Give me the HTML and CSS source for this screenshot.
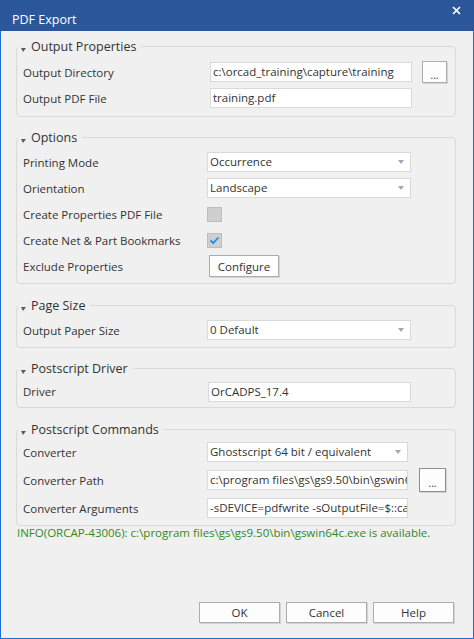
FILE: index.html
```html
<!DOCTYPE html>
<html lang="en">
<head>
<meta charset="utf-8">
<title>PDF Export</title>
<link rel="stylesheet" href="styles.css">
</head>
<body>
<div class="window">
  <div class="titlebar">
    <span class="title">PDF Export</span>
    <span class="close" aria-label="Close">
      <svg width="9" height="9" viewBox="0 0 9 9"><path d="M1 1 L8 8 M8 1 L1 8" stroke="#ffffff" stroke-width="1.7" fill="none"/></svg>
    </span>
  </div>
  <div class="content">
    <fieldset class="group g-output">
      <legend>Output Properties</legend>
      <div class="row"><span class="label">Output Directory</span><div class="ctrl"><div class="text indent">c:\orcad_training\capture\training</div><button class="btn dots dots-a">...</button></div></div>
      <div class="row"><span class="label">Output PDF File</span><div class="ctrl"><div class="text indent">training.pdf</div></div></div>
    </fieldset>

    <fieldset class="group g-options">
      <legend>Options</legend>
      <div class="row"><span class="label">Printing Mode</span><div class="ctrl"><div class="text select">Occurrence</div></div></div>
      <div class="row"><span class="label">Orientation</span><div class="ctrl"><div class="text select">Landscape</div></div></div>
      <div class="row"><span class="label">Create Properties PDF File</span><div class="ctrl"><span class="check"></span></div></div>
      <div class="row"><span class="label">Create Net &amp; Part Bookmarks</span><div class="ctrl"><span class="check checked"><svg width="11" height="9" viewBox="0 0 11 9"><path d="M1.5 4.5 L4.2 7 L9.5 1.5" stroke="#1a8cf0" stroke-width="1.8" fill="none"/></svg></span></div></div>
      <div class="row"><span class="label">Exclude Properties</span><div class="ctrl"><button class="btn configure">Configure</button></div></div>
    </fieldset>

    <fieldset class="group g-page">
      <legend>Page Size</legend>
      <div class="row"><span class="label">Output Paper Size</span><div class="ctrl"><div class="text select">0 Default</div></div></div>
    </fieldset>

    <fieldset class="group g-driver">
      <legend>Postscript Driver</legend>
      <div class="row short"><span class="label">Driver</span><div class="ctrl"><div class="text driver">OrCADPS_17.4</div></div></div>
    </fieldset>

    <fieldset class="group g-commands">
      <legend>Postscript Commands</legend>
      <div class="row tall"><span class="label">Converter</span><div class="ctrl"><div class="text select narrow">Ghostscript 64 bit / equivalent</div></div></div>
      <div class="row tall"><span class="label">Converter Path</span><div class="ctrl"><div class="text narrow">c:\program files\gs\gs9.50\bin\gswin64c.exe</div><button class="btn dots dots-b">...</button></div></div>
      <div class="row tall"><span class="label">Converter Arguments</span><div class="ctrl"><div class="text narrow">-sDEVICE=pdfwrite -sOutputFile=$::capPdfUtil::mPdfFile</div></div></div>
    </fieldset>

    <div class="info">INFO(ORCAP-43006): c:\program files\gs\gs9.50\bin\gswin64c.exe is available.</div>

    <div class="actions">
      <button class="btn action">OK</button>
      <button class="btn action">Cancel</button>
      <button class="btn action">Help</button>
    </div>
  </div>
</div>
</body>
</html>
```
FILE: styles.css
```css
* { box-sizing: border-box; }
html, body { margin: 0; padding: 0; background: #f0f0f0; }
body {
  font-family: "Segoe UI", "Open Sans", "Noto Sans", sans-serif;
  font-size: 11.5px;
  color: #333333;
}
.window {
  width: 474px;
  height: 639px;
  display: flex;
  flex-direction: column;
  border: 1px solid #1f6fd0;
  border-top: none;
  background: #f0f0f0;
}
.titlebar {
  height: 31px;
  flex: none;
  margin: 0 -1px;
  background: #2b579a;
  display: flex;
  align-items: center;
  justify-content: space-between;
  padding: 0 13px 0 12px;
  color: #ffffff;
}
.title { font-size: 12.5px; line-height: 17px; padding-top: 7px; }
.close { display: flex; padding-bottom: 10px; }
.content {
  flex: 1;
  display: flex;
  flex-direction: column;
  padding: 7px 17px 15px 15px;
}
.group {
  margin: 0;
  padding: 3px 0 4px 1px;
  border: 1px solid #d9d9d9;
  border-radius: 4px;
  min-width: 0;
}
.g-output { padding-top: 4px; padding-bottom: 5px; }
.g-options { margin-top: 12px; }
.g-page { margin-top: 13px; }
.g-driver { margin-top: 12px; }
.g-commands { margin-top: 13px; padding-top: 0; padding-bottom: 3px; }
.group legend {
  position: relative;
  padding: 0 5px 0 13px;
  font-size: 12.5px;
  line-height: 17px;
  height: 17px;
  color: #333333;
}
.group legend::before {
  content: "";
  position: absolute;
  left: 3px;
  top: 10px;
  width: 0;
  height: 0;
  border-left: 2px solid transparent;
  border-right: 3px solid transparent;
  border-top: 4px solid #5a5a5a;
}
.row {
  display: flex;
  align-items: center;
  height: 26px;
  padding-left: 5px;
}
.row.short { height: 23px; }
.row.tall { height: 28px; }
.label { width: 184px; flex: none; white-space: nowrap; }
.ctrl { display: flex; align-items: center; flex: 1; }
.text {
  position: relative;
  width: 204px;
  height: 20px;
  background: #ffffff;
  border: 1px solid #d9d9d9;
  padding: 0 2px;
  line-height: 18px;
  white-space: nowrap;
  overflow: hidden;
  text-overflow: clip;
}
.text.indent { margin-left: 3px; width: 202px; }
.text.driver { margin-left: 1px; width: 203px; }
.text.narrow { width: 201px; }
.text.select { padding-right: 16px; }
.text.select::after {
  content: "";
  position: absolute;
  right: 6px;
  top: 7px;
  border-left: 3px solid transparent;
  border-right: 3px solid transparent;
  border-top: 4px solid #9ea8ba;
}
.check {
  width: 15px;
  height: 15px;
  background: #cfcfcf;
  border: 1px solid #bdbdbd;
  display: flex;
  align-items: center;
  justify-content: center;
}
.btn {
  font-family: inherit;
  font-size: 11.5px;
  color: #333333;
  background: #fdfdfd;
  border: 1px solid #adadad;
  box-shadow: 1px 1px 0 #d4d4d4;
  border-radius: 0;
  padding: 0;
  margin: 0;
}
.dots {
  font-size: 10px;
  line-height: 10px;
  padding-top: 6px;
}
.dots-a { width: 25px; height: 22px; margin-left: 10px; }
.dots-b { width: 27px; height: 24px; margin-left: 11px; border-color: #8f8f8f; }
.configure { width: 70px; height: 22px; margin-left: 2px; }
.info {
  color: #2e8b22;
  line-height: 14px;
  white-space: nowrap;
  margin-left: 1px;
}
.actions {
  margin-top: auto;
  display: flex;
  justify-content: flex-end;
  gap: 6px;
  padding-right: 2px;
}
.action { width: 81px; height: 21px; }
```
